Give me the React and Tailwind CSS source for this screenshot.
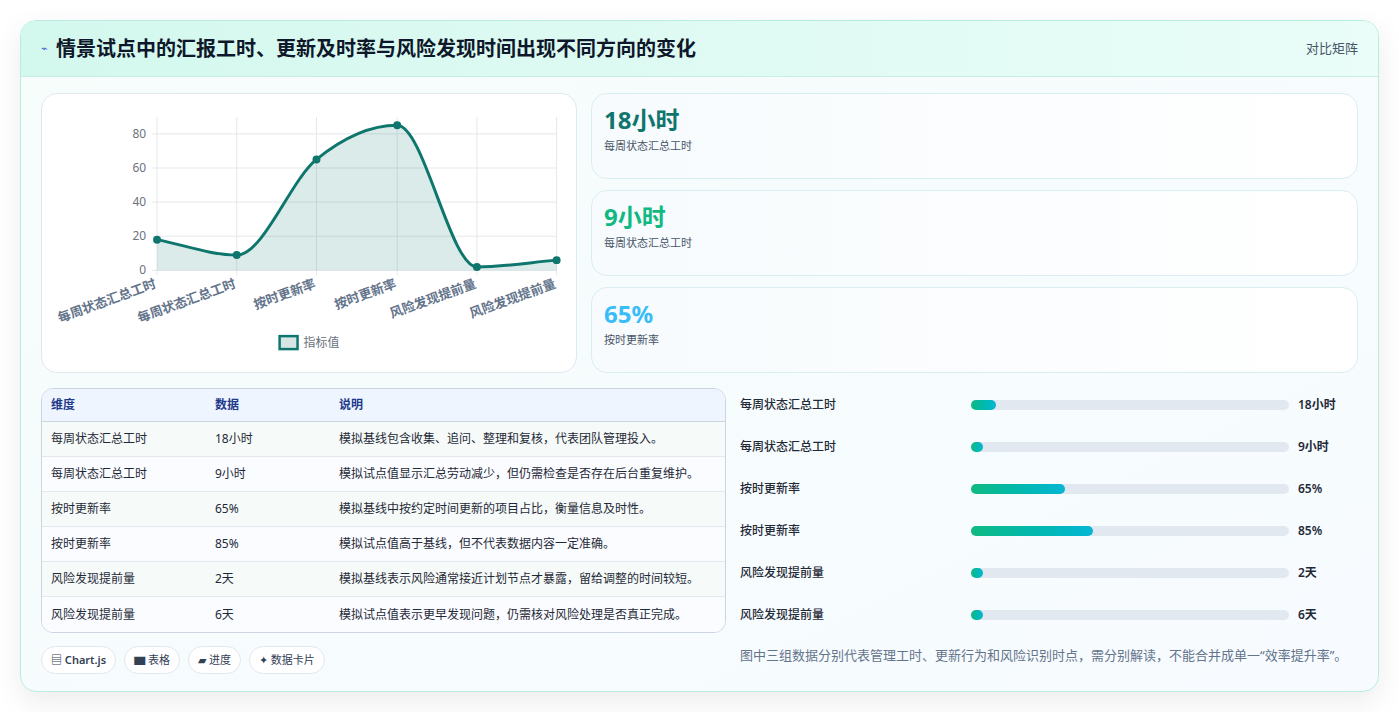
import React from "react";

const font = { fontFamily: '"Noto Sans", "Noto Sans CJK SC", sans-serif' };

const stats = [
  { v: "18小时", l: "每周状态汇总工时", c: "text-[#0f766e]" },
  { v: "9小时", l: "每周状态汇总工时", c: "text-[#10b981]" },
  { v: "65%", l: "按时更新率", c: "text-[#38bdf8]" },
];

const rows = [
  ["每周状态汇总工时", "18小时", "模拟基线包含收集、追问、整理和复核，代表团队管理投入。", 8],
  ["每周状态汇总工时", "9小时", "模拟试点值显示汇总劳动减少，但仍需检查是否存在后台重复维护。", 3.8],
  ["按时更新率", "65%", "模拟基线中按约定时间更新的项目占比，衡量信息及时性。", 29.5],
  ["按时更新率", "85%", "模拟试点值高于基线，但不代表数据内容一定准确。", 38.5],
  ["风险发现提前量", "2天", "模拟基线表示风险通常接近计划节点才暴露，留给调整的时间较短。", 3.8],
  ["风险发现提前量", "6天", "模拟试点值表示更早发现问题，仍需核对风险处理是否真正完成。", 3.8],
];

const xs = [155, 235, 315, 396, 476, 556];
const vals = [18, 9, 65, 85, 2, 6];
const ys = vals.map((v) => 270 - v * 1.7125);

// monotone cubic so the line never overshoots
function curve() {
  const n = xs.length;
  const d = [];
  for (let i = 0; i < n - 1; i++) d.push((ys[i + 1] - ys[i]) / (xs[i + 1] - xs[i]));
  const m = [d[0]];
  for (let i = 1; i < n - 1; i++) m.push(d[i - 1] * d[i] <= 0 ? 0 : (d[i - 1] + d[i]) / 2);
  m.push(d[n - 2]);
  for (let i = 0; i < n - 1; i++) {
    if (d[i] === 0) { m[i] = 0; m[i + 1] = 0; continue; }
    const a = m[i] / d[i], b = m[i + 1] / d[i], s = a * a + b * b;
    if (s > 9) { const t = 3 / Math.sqrt(s); m[i] = t * a * d[i]; m[i + 1] = t * b * d[i]; }
  }
  let p = `M${xs[0]},${ys[0]}`;
  for (let i = 0; i < n - 1; i++) {
    const h = (xs[i + 1] - xs[i]) / 3;
    p += ` C${xs[i] + h},${ys[i] + m[i] * h} ${xs[i + 1] - h},${ys[i + 1] - m[i + 1] * h} ${xs[i + 1]},${ys[i + 1]}`;
  }
  return p;
}

function Chart() {
  const line = curve();
  const labels = ["每周状态汇总工时", "每周状态汇总工时", "按时更新率", "按时更新率", "风险发现提前量", "风险发现提前量"];
  return (
    <svg viewBox="40 93 535 279" className="w-full h-full" style={font}>
      {[0, 20, 40, 60, 80].map((v) => (
        <g key={v}>
          <line x1="150" x2="556" y1={270 - v * 1.7125} y2={270 - v * 1.7125} stroke="#e5e7eb" />
          <text x="144" y={274 - v * 1.7125} textAnchor="end" fontSize="12" fill="#6b7280">{v}</text>
        </g>
      ))}
      {xs.map((x) => (
        <line key={x} x1={x} x2={x} y1="116" y2="275" stroke="#e5e7eb" />
      ))}
      <path d={`${line} L556,270 L155,270 Z`} fill="#0f766e" fillOpacity="0.15" />
      <path d={line} fill="none" stroke="#0f766e" strokeWidth="3" />
      {xs.map((x, i) => (
        <circle key={i} cx={x} cy={ys[i]} r="4" fill="#0f766e" />
      ))}
      {xs.map((x, i) => (
        <text key={i} x={x} y="287" textAnchor="end" fontSize="13" fontWeight="600" fill="#64748b" transform={`rotate(-20 ${x} 287)`}>{labels[i]}</text>
      ))}
      <rect x="278" y="336" width="18" height="13" fill="#d7e6e5" stroke="#0f766e" strokeWidth="2.5" />
      <text x="302" y="347" fontSize="12" fill="#6b7280">指标值</text>
    </svg>
  );
}

export default function App() {
  return (
    <div className="min-h-screen bg-white p-5" style={font}>
      <div className="h-[672px] rounded-2xl border border-[#b9ecdf] bg-gradient-to-br from-[#f6fdfb] to-[#f7fbff] shadow-[0_10px_30px_rgba(0,0,0,0.08)] overflow-hidden">
        <div className="h-[56px] flex items-center justify-between px-5 bg-gradient-to-r from-[#d3f8ee] to-[#eafdf8] border-b border-[#c9efe4]">
          <div className="flex items-center gap-2">
            <span className="text-[#3b5bdb] text-[11px]">⌁</span>
            <h1 className="text-[20px] font-bold text-[#0f172a]">情景试点中的汇报工时、更新及时率与风险发现时间出现不同方向的变化</h1>
          </div>
          <span className="text-[13px] text-[#475569]">对比矩阵</span>
        </div>
        <div className="p-5 pt-4">
          <div className="flex gap-[14px]">
            <div className="w-[536px] h-[280px] rounded-2xl bg-white border border-[#e2e8f0]">
              <Chart />
            </div>
            <div className="flex-1 flex flex-col gap-[11px]">
              {stats.map((s, i) => (
                <div key={i} className="h-[86px] rounded-2xl border border-[#d9eef0] bg-gradient-to-r from-[#f7fbfd] to-white px-3 pt-[10px]">
                  <div className={`text-[24px] font-bold leading-[32px] ${s.c}`}>{s.v}</div>
                  <div className="text-[11px] text-[#475569] mt-[2px]">{s.l}</div>
                </div>
              ))}
            </div>
          </div>
          <div className="flex gap-[14px] mt-[15px]">
            <div className="w-[685px]">
              <div className="rounded-xl border border-[#cbd5e1] overflow-hidden bg-white">
                <div className="flex h-[33px] items-center bg-[#eef5ff] border-b border-[#cbd5e1] text-[12px] font-semibold text-[#1e3a8a]">
                  <div className="w-[173px] pl-[9px]">维度</div>
                  <div className="w-[124px]">数据</div>
                  <div>说明</div>
                </div>
                {rows.map((r, i) => (
                  <div key={i} className={`flex h-[35px] items-center text-[12px] text-[#1f2937] ${i < 5 ? "border-b border-[#e5e7eb]" : ""} ${i % 2 ? "bg-[#fafcff]" : "bg-[#f6fbf9]"}`}>
                    <div className="w-[173px] pl-[9px]">{r[0]}</div>
                    <div className="w-[124px]">{r[1]}</div>
                    <div>{r[2]}</div>
                  </div>
                ))}
              </div>
              <div className="flex gap-2 mt-[13px] text-[11px] text-[#334155]">
                {["▤ Chart.js", "▆ 表格", "▰ 进度", "✦ 数据卡片"].map((t, i) => (
                  <span key={i} className={`h-[28px] px-[9px] flex items-center rounded-full border border-[#e2e8f0] bg-white ${i === 0 ? "font-semibold" : ""}`}>{t}</span>
                ))}
              </div>
            </div>
            <div className="flex-1 -mt-[4px]">
              {rows.map((r, i) => (
                <div key={i} className="h-[42px] flex items-center text-[12px] font-medium text-[#1f2937]">
                  <div className="w-[231px]">{r[0]}</div>
                  <div className="w-[318px] h-[10px] rounded-full bg-[#e2e8f0]">
                    <div className="h-full rounded-full bg-gradient-to-r from-[#10b981] to-[#06b6d4]" style={{ width: `${r[3]}%` }} />
                  </div>
                  <div className="ml-[9px] font-semibold">{r[1]}</div>
                </div>
              ))}
              <p className="mt-[10px] text-[13px] text-[#64748b]">图中三组数据分别代表管理工时、更新行为和风险识别时点，需分别解读，不能合并成单一“效率提升率”。</p>
            </div>
          </div>
        </div>
      </div>
    </div>
  );
}
